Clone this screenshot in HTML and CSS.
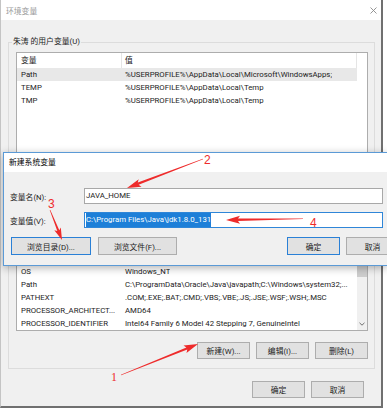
FILE: index.html
```html
<!DOCTYPE html>
<html lang="zh-CN">
<head>
    <meta charset="UTF-8">
    <meta name="viewport" content="width=device-width, initial-scale=1.0">
    <title>环境变量</title>
    <link rel="stylesheet" href="styles.css">
</head>
<body>
    <div class="window">
        <div class="titlebar">
            <span class="title">环境变量</span>
            <svg class="close" width="7" height="7" viewBox="0 0 7 7"><path d="M0.5 0.5 L6.5 6.5 M6.5 0.5 L0.5 6.5" stroke="#8a8a8a" stroke-width="0.9" fill="none"/></svg>
        </div>

        <div class="content">
            <fieldset class="group">
                <legend>朱涛 的用户变量(U)</legend>
                <div class="list user-list">
                    <div class="list-body">
                        <div class="list-head"><span class="col-name">变量</span><span class="col-value">值</span></div>
                        <div class="row selected"><span class="col-name">Path</span><span class="col-value">%USERPROFILE%\AppData\Local\Microsoft\WindowsApps;</span></div>
                        <div class="row"><span class="col-name">TEMP</span><span class="col-value">%USERPROFILE%\AppData\Local\Temp</span></div>
                        <div class="row"><span class="col-name">TMP</span><span class="col-value">%USERPROFILE%\AppData\Local\Temp</span></div>
                    </div>
                    <div class="scroll-space"></div>
                </div>
                <div class="btn-row">
                    <button class="btn">新建(N)...</button>
                    <button class="btn">编辑(E)...</button>
                    <button class="btn">删除(D)</button>
                </div>
            </fieldset>

            <!-- system variables; the top of this group is covered by the dialog -->
            <fieldset class="group group-sys">
                <div class="list sys-list">
                    <div class="list-body">
                        <div class="row"><span class="col-name">OS</span><span class="col-value">Windows_NT</span></div>
                        <div class="row"><span class="col-name">Path</span><span class="col-value">C:\ProgramData\Oracle\Java\javapath;C:\Windows\system32;...</span></div>
                        <div class="row"><span class="col-name">PATHEXT</span><span class="col-value">.COM;.EXE;.BAT;.CMD;.VBS;.VBE;.JS;.JSE;.WSF;.WSH;.MSC</span></div>
                        <div class="row"><span class="col-name">PROCESSOR_ARCHITECT...</span><span class="col-value">AMD64</span></div>
                        <div class="row"><span class="col-name">PROCESSOR_IDENTIFIER</span><span class="col-value">Intel64 Family 6 Model 42 Stepping 7, GenuineIntel</span></div>
                    </div>
                    <div class="scrollbar">
                        <div class="thumb"></div>
                        <svg class="arrow-down" width="6" height="4" viewBox="0 0 6 4"><path d="M0.5 0.8 L3 3.2 L5.5 0.8" stroke="#606060" stroke-width="0.9" fill="none"/></svg>
                    </div>
                </div>
                <div class="btn-row">
                    <button class="btn">新建(W)...</button>
                    <button class="btn">编辑(I)...</button>
                    <button class="btn">删除(L)</button>
                </div>
            </fieldset>

            <div class="btn-row footer">
                <button class="btn">确定</button>
                <button class="btn">取消</button>
            </div>
        </div>
    </div>

    <div class="dialog">
        <div class="dialog-title">新建系统变量</div>
        <div class="dialog-body">
            <div class="field">
                <label>变量名(N):</label>
                <div class="textbox">JAVA_HOME</div>
            </div>
            <div class="field">
                <label>变量值(V):</label>
                <div class="textbox focused"><span class="selection">C:\Program Files\Java\jdk1.8.0_131</span></div>
            </div>
            <div class="dlg-buttons">
                <button class="btn default browse-dir">浏览目录(D)...</button>
                <button class="btn browse-file">浏览文件(F)...</button>
                <button class="btn default ok">确定</button>
                <button class="btn">取消</button>
            </div>
        </div>
    </div>

    <!-- red annotations drawn over the screenshot -->
    <svg class="marks" width="387" height="411" viewBox="0 0 387 411">
        <g fill="#ee2b2b">
            <polygon points="121.1,375.3 187.3,349.6 186.5,352.9 198,344 183.5,345.5 186.4,347.4 120.9,374.7"/>
            <polygon points="202.9,158.7 137.8,182.6 138.7,179.3 127,188 141.5,186.8 138.6,184.8 203.1,159.3"/>
            <polygon points="49.7,210.1 57.3,231.1 54.3,230.2 62,240 60.8,227.6 59.3,230.3 50.3,209.9"/>
            <polygon points="303,218.4 238,218.6 240,215.8 226,220 240,223.8 238,221 303,219"/>
            <text x="111" y="381" class="num serif">1</text>
            <text x="204" y="164" class="num">2</text>
            <text x="48" y="208" class="num">3</text>
            <text x="310" y="227" class="num">4</text>
        </g>
    </svg>
</body>
</html>
```

FILE: styles.css
```css
* {
    box-sizing: border-box;
}
body {
    margin: 0;
    width: 387px;
    height: 411px;
    overflow: hidden;
    position: relative;
    background: #fff;
    font-family: Roboto, "Noto Sans CJK SC", sans-serif;
    font-size: 7.8px;
    color: #1b1b1b;
}
.window {
    width: 383px;
    background: #f0f0f0;
    border-left: 1px solid #c4c4c4;
    border-right: 2px solid #707070;
    border-bottom: 2px solid #707070;
}
.titlebar {
    height: 20px;
    background: #fff;
    display: flex;
    align-items: center;
    justify-content: space-between;
    padding: 0 4px 0 5px;
}
.title {
    color: #9a9a9a;
}
.content {
    padding: 16px 0 8px;
}
.group {
    margin: 0 6px 0 7px;
    padding: 4px 6px 10px 7px;
    border: 1px solid #dcdcdc;
    min-width: 0;
}
.group-sys {
    margin-top: 12px;
    padding-top: 9px;
    padding-bottom: 9px;
}
legend {
    padding: 0 1px;
    margin-left: -4px;
    line-height: 12px;
}
.list {
    display: flex;
    background: #fff;
    border: 1px solid #adadad;
    overflow: hidden;
}
.user-list {
    height: 110px;
}
.sys-list {
    height: 108px;
}
.sys-list .list-body {
    padding-top: 41px;
}
.list-body {
    width: 340px;
}
.scroll-space {
    flex: 1;
}
.list-head {
    display: flex;
    height: 15px;
    line-height: 15px;
    border-right: 1px solid #e5e5e5;
}
.list-head .col-name {
    border-right: 1px solid #e5e5e5;
}
.row {
    display: flex;
    height: 13px;
    line-height: 13px;
}
.row.selected {
    background: #e8e8e8;
}
.col-name {
    width: 105px;
    flex-shrink: 0;
    padding-left: 4px;
    white-space: nowrap;
    overflow: hidden;
}
.col-value {
    padding-left: 3px;
    white-space: nowrap;
    overflow: hidden;
}
.scrollbar {
    flex: 1;
    display: flex;
    flex-direction: column;
    align-items: center;
    background: #f0f0f0;
}
.thumb {
    width: 100%;
    height: 40px;
    margin-top: 13px;
    background: #cdcdcd;
}
.arrow-down {
    margin-top: auto;
    margin-bottom: 4px;
}
.btn-row {
    display: flex;
    justify-content: flex-end;
    gap: 6px;
    margin-top: 11px;
}
.btn {
    width: 53px;
    height: 17px;
    padding: 0;
    background: #e1e1e1;
    border: 1px solid #adadad;
    font: inherit;
    color: inherit;
    white-space: nowrap;
}
.footer {
    margin-top: 12px;
    padding-right: 17px;
}
.dialog {
    position: absolute;
    left: 3px;
    top: 152px;
    width: 384px;
    overflow: hidden;
    background: #f0f0f0;
    border: 1px solid #5b9ad6;
    border-right: none;
    box-shadow: 0 2px 8px rgba(0, 0, 0, 0.3);
}
.dialog-title {
    height: 19px;
    line-height: 19px;
    padding-left: 5px;
    background: #fff;
    color: #000;
}
.dialog-body {
    padding: 16px 0 10px 6px;
}
.field {
    display: flex;
    align-items: center;
}
.field + .field {
    margin-top: 8px;
}
.field label {
    width: 74px;
}
.textbox {
    width: 299px;
    height: 16px;
    line-height: 14px;
    padding-left: 1px;
    background: #fff;
    border: 1px solid #a8a8a8;
    white-space: nowrap;
}
.textbox.focused {
    border-color: #2f86d8;
}
.selection {
    display: inline-block;
    background: #1d7fd8;
    color: #fff;
}
.dlg-buttons {
    display: flex;
    margin-top: 9px;
}
.dlg-buttons .btn {
    height: 18px;
    flex-shrink: 0;
}
.btn.default {
    border-color: #2a80d6;
}
.browse-dir {
    width: 80px;
    margin-left: 1px;
}
.browse-file {
    width: 79px;
    margin-left: 7px;
}
.ok {
    margin-left: 110px;
    margin-right: 6px;
}
.marks {
    position: absolute;
    left: 0;
    top: 0;
    pointer-events: none;
}
.num {
    font-family: "Liberation Sans", sans-serif;
    font-size: 12px;
}
.num.serif {
    font-family: "Liberation Serif", serif;
}
```
